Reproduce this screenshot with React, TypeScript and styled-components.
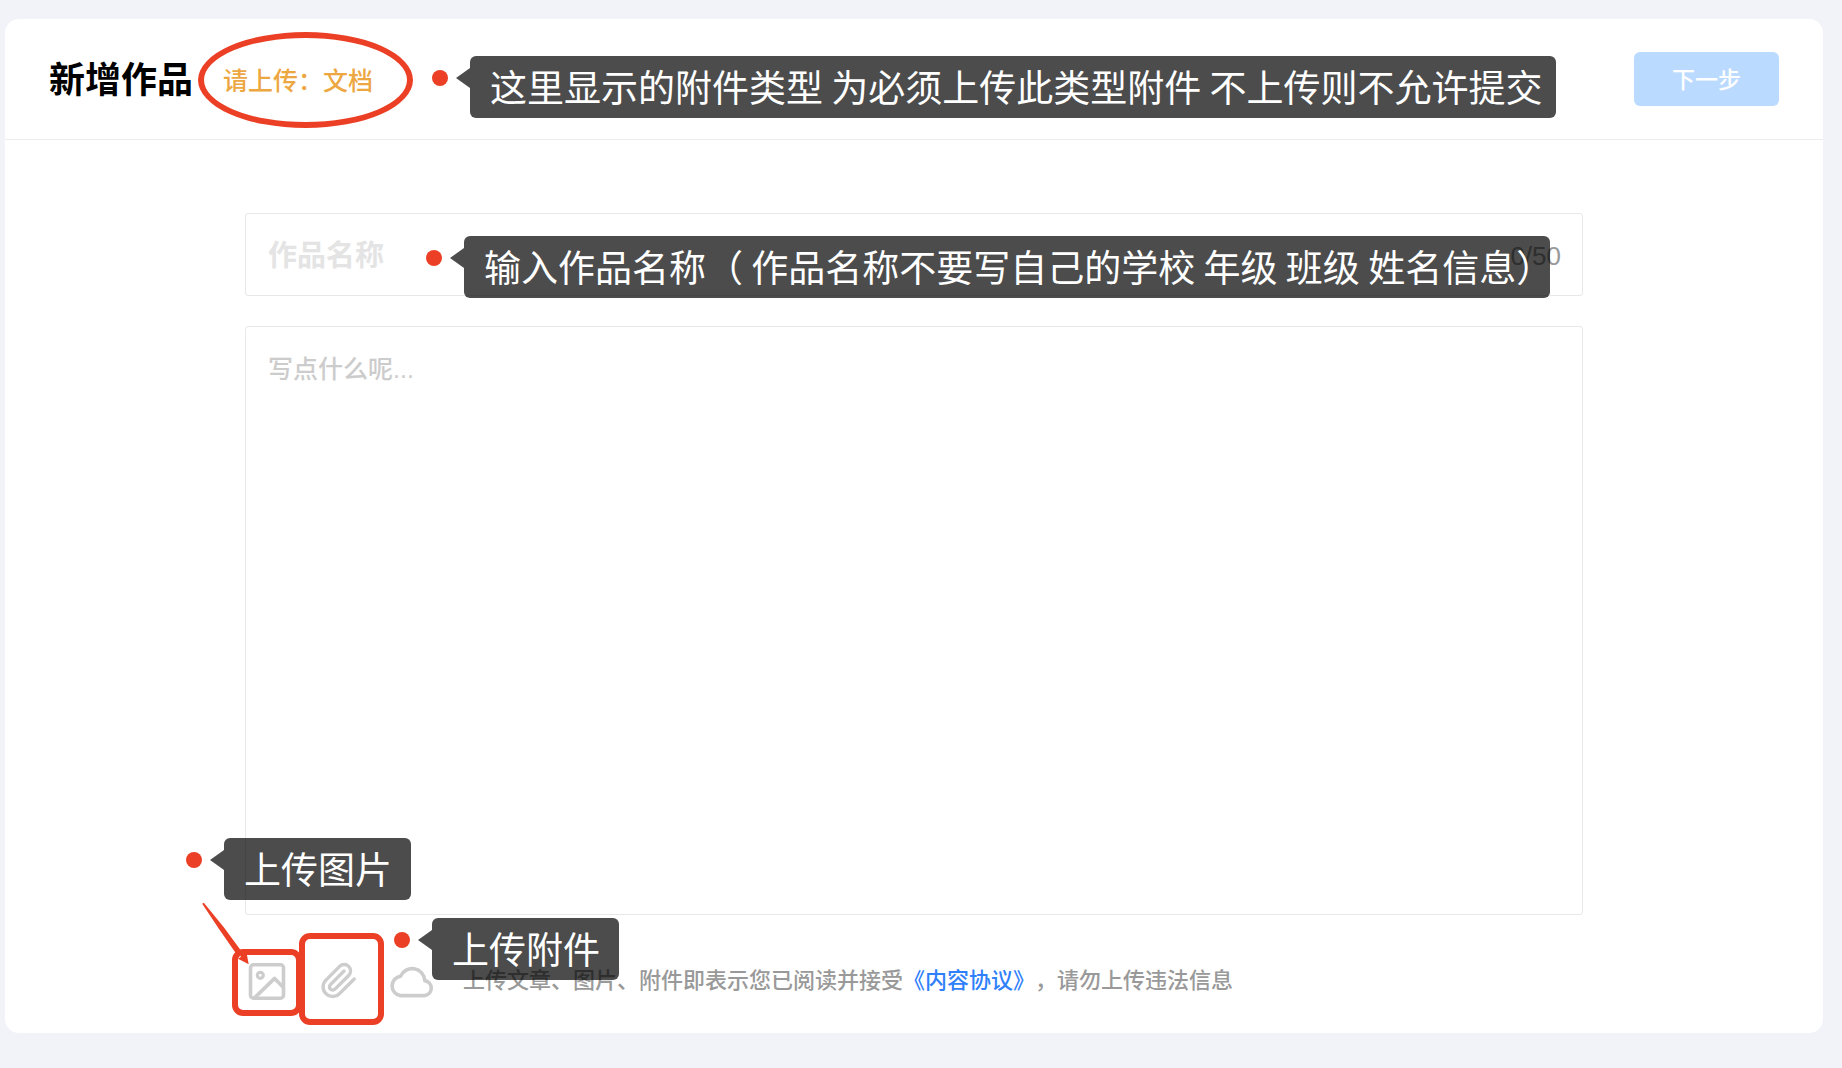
import React from 'react';
import styled, { createGlobalStyle } from 'styled-components';

const FONT = '"Liberation Sans", "Noto Sans CJK SC", sans-serif';
const NOTE_FONT = '"Noto Sans CJK SC", sans-serif';
const RED = '#eb4026';

const GlobalStyle = createGlobalStyle`
  *, *::before, *::after { box-sizing: border-box; }
  body { margin: 0; background: #f2f3f8; font-family: ${FONT}; }
  button, input, textarea { font-family: inherit; }
`;

const Page = styled.div`
  position: relative;
  min-height: 100vh;
  padding: 19px 19px 35px 5px;
`;

const Card = styled.main`
  background: #fff;
  border-radius: 14px;
`;

const Header = styled.header`
  display: flex;
  align-items: center;
  gap: 30px;
  padding: 33px 44px;
  border-bottom: 1px solid #ececec;
`;

const Title = styled.h1`
  margin: 0;
  padding-top: 4px;
  font-size: 36px;
  line-height: 50px;
  font-weight: 700;
  color: #000;
`;

const Required = styled.span`
  flex: 1;
  padding-top: 4px;
  font-size: 25px;
  line-height: 50px;
  font-weight: 500;
  color: #eda742;
`;

const NextButton = styled.button`
  width: 145px;
  height: 54px;
  padding: 0 0 2px;
  border: 0;
  border-radius: 6px;
  background: #bbdaff;
  color: #fff;
  font-size: 23px;
  font-weight: 500;
`;

const Form = styled.form`
  display: flex;
  flex-direction: column;
  gap: 30px;
  padding: 73px 240px 28px;
`;

const NameField = styled.div`
  display: flex;
  align-items: center;
  height: 83px;
  padding: 4px 21px 0 22px;
  border: 1px solid #e8e8e8;
  border-radius: 3px;
`;

const NameInput = styled.input`
  flex: 1;
  min-width: 0;
  height: 60px;
  padding: 0;
  border: 0;
  outline: 0;
  background: transparent;
  font-size: 29px;
  font-weight: 700;
  &::placeholder { color: #e4e4e4; opacity: 1; }
`;

const Counter = styled.span`
  font-size: 26px;
  color: #999;
`;

const Content = styled.textarea`
  display: block;
  width: 100%;
  height: 589px;
  padding: 24px 22px;
  border: 1px solid #e8e8e8;
  border-radius: 3px;
  outline: 0;
  resize: none;
  font-size: 25px;
  line-height: 36px;
  font-weight: 500;
  &::placeholder { color: #ccc; opacity: 1; }
`;

const Footer = styled.div`
  display: flex;
  align-items: center;
  gap: 30px;
  height: 48px;
  margin-top: 12px;
`;

const Tools = styled.div`
  display: flex;
  gap: 28px;
`;

const ToolButton = styled.button`
  width: 44px;
  height: 44px;
  padding: 0;
  border: 0;
  background: transparent;
  color: #cdcdcd;
  svg { display: block; overflow: visible; }
`;

const Agreement = styled.p`
  margin: 0;
  font-size: 22px;
  line-height: 32px;
  color: #999;
  font-weight: 500;
  white-space: nowrap;
  text-spacing-trim: space-all;
  a { color: #2f80fa; text-decoration: none; }
`;

const Bubble = styled.div<{ $x: number; $y: number; $width: number }>`
  position: absolute;
  left: ${(p) => p.$x}px;
  top: ${(p) => p.$y}px;
  width: ${(p) => p.$width}px;
  height: 62px;
  padding-left: 20px;
  border-radius: 6px;
  background: rgba(0, 0, 0, 0.7);
  color: #fff;
  font-family: ${NOTE_FONT};
  font-size: 37px;
  line-height: 60px;
  font-weight: 400;
  white-space: nowrap;

  &::before {
    content: '';
    position: absolute;
    left: -38px;
    top: 14px;
    width: 16px;
    height: 16px;
    border-radius: 50%;
    background: ${RED};
  }

  &::after {
    content: '';
    position: absolute;
    left: -14px;
    top: 12px;
    border: solid transparent;
    border-width: 10px 14px 10px 0;
    border-right-color: rgba(0, 0, 0, 0.7);
  }
`;

const Outline = styled.div<{ $x: number; $y: number; $w: number; $h: number; $radius: string }>`
  position: absolute;
  left: ${(p) => p.$x}px;
  top: ${(p) => p.$y}px;
  width: ${(p) => p.$w}px;
  height: ${(p) => p.$h}px;
  border: 6px solid ${RED};
  border-radius: ${(p) => p.$radius};
  pointer-events: none;
`;

const Arrow = styled.svg`
  position: absolute;
  left: 200px;
  top: 900px;
  pointer-events: none;
`;

const iconProps = {
  width: 44,
  height: 44,
  viewBox: '0 0 44 44',
  fill: 'none',
  stroke: 'currentColor',
  strokeWidth: 3.6,
  strokeLinecap: 'round' as const,
  strokeLinejoin: 'round' as const,
  'aria-hidden': true,
};

const ImageIcon = () => (
  <svg {...iconProps}>
    <rect x="5.5" y="5.8" width="33" height="33.4" rx="3" />
    <circle cx="15.3" cy="16.3" r="3" strokeWidth="3.2" />
    <path d="M10 38.4 29.6 19.4 38 28" />
  </svg>
);

const ClipIcon = () => (
  <svg {...iconProps}>
    <g transform="translate(2.9 2.3) scale(1.6)" strokeWidth="2.1">
      <path d="M21.44 11.05l-9.19 9.19a6 6 0 0 1-8.49-8.49l8.57-8.57A4 4 0 1 1 18 8.84l-8.59 8.57a2 2 0 0 1-2.83-2.83l8.49-8.48" />
    </g>
  </svg>
);

const CloudIcon = () => (
  <svg {...iconProps}>
    <path d="M11.5 36.6A9.8 9.8 0 0 1 11.5 17.2 12.7 12.7 0 0 1 35.8 21.6 7.6 7.6 0 0 1 36 36.6Z" />
  </svg>
);

export default function App() {
  return (
    <Page>
      <GlobalStyle />
      <Card>
        <Header>
          <Title>新增作品</Title>
          <Required>请上传：文档</Required>
          <NextButton type="button">下一步</NextButton>
        </Header>
        <Form>
          <NameField>
            <NameInput type="text" aria-label="作品名称" placeholder="作品名称" maxLength={50} />
            <Counter>0/50</Counter>
          </NameField>
          <Content aria-label="作品内容" placeholder="写点什么呢..." />
          <Footer>
            <Tools>
              <ToolButton type="button" aria-label="上传图片"><ImageIcon /></ToolButton>
              <ToolButton type="button" aria-label="上传附件"><ClipIcon /></ToolButton>
              <ToolButton type="button" aria-label="云盘"><CloudIcon /></ToolButton>
            </Tools>
            <Agreement>
              上传文章、图片、附件即表示您已阅读并接受<a href="#agreement">《内容协议》</a>，请勿上传违法信息
            </Agreement>
          </Footer>
        </Form>
      </Card>

      <Outline $x={198} $y={32} $w={215} $h={96} $radius="50%" />
      <Outline $x={232} $y={949} $w={70} $h={67} $radius="11px" />
      <Outline $x={299} $y={933} $w={85} $h={92} $radius="11px" />
      <Arrow width="52" height="68" viewBox="0 0 52 68" aria-hidden="true">
        <path d="M2.2 3.8 3.8 2.8 24 27.5 40.5 50 46.5 52.5 48.7 64.3 38 58.8 40.8 57 40 54 35 52 19 29Z" fill={RED} />
      </Arrow>

      <Bubble $x={470} $y={56} $width={1086}>这里显示的附件类型 为必须上传此类型附件 不上传则不允许提交</Bubble>
      <Bubble $x={464} $y={236} $width={1086}>输入作品名称（ 作品名称不要写自己的学校 年级 班级 姓名信息）</Bubble>
      <Bubble $x={224} $y={838} $width={187}>上传图片</Bubble>
      <Bubble $x={432} $y={918} $width={187}>上传附件</Bubble>
    </Page>
  );
}
